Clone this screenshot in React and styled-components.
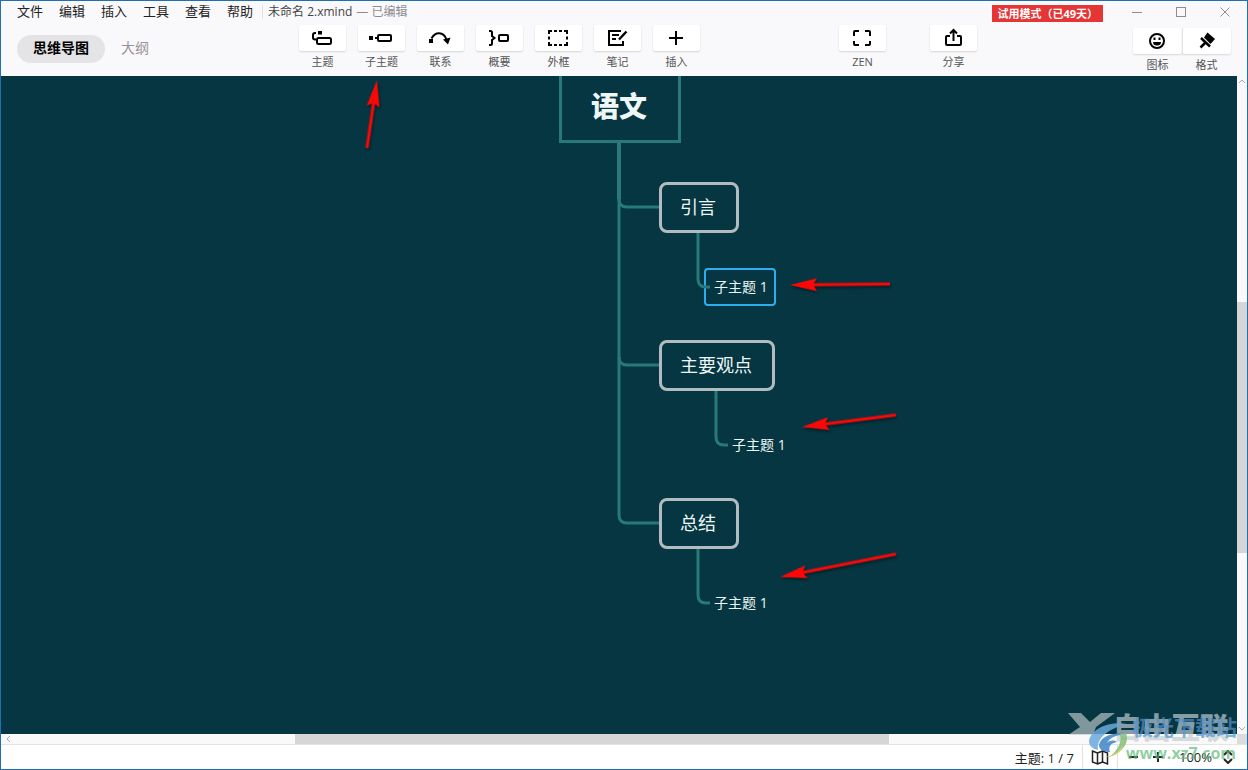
import { useState } from "react";
import styled, { createGlobalStyle } from "styled-components";

const GlobalStyle = createGlobalStyle`
  * {
    box-sizing: border-box;
  }
  body {
    margin: 0;
    font-family: "Open Sans", "Noto Sans CJK SC", sans-serif;
    color: #222;
  }
  button {
    font-family: inherit;
    border: none;
    background: none;
    padding: 0;
    color: inherit;
    cursor: pointer;
  }
`;

const Window = styled.div`
  height: 100vh;
  display: flex;
  flex-direction: column;
  border: 1px solid #1f6fb5;
  background: #fff;
  overflow: hidden;
  position: relative;
`;

/* ---------- header ---------- */

const Header = styled.header`
  height: 75px;
  background: #f9f9fc;
`;

const TitleBar = styled.div`
  height: 23px;
  display: flex;
  align-items: center;
  padding: 0 0 2px 16px;
`;

const Menu = styled.nav`
  display: flex;
  gap: 16px;
  button {
    font-size: 13px;
    line-height: 21px;
  }
`;

const DocTitle = styled.div`
  display: flex;
  gap: 4px;
  margin-left: 9px;
  padding-left: 5px;
  border-left: 1px solid #e2e2e6;
  font-size: 12px;
  line-height: 14px;
  color: #444;
`;

const Edited = styled.span`
  color: #8c8c90;
`;

const TrialBadge = styled.div`
  margin: 2px 12px 0 auto;
  padding: 0 5px;
  background: #e53535;
  color: #fff;
  font-size: 11px;
  font-weight: 700;
  line-height: 17px;
  align-self: flex-end;
`;

const WindowButton = styled.button`
  width: 44px;
  height: 21px;
  display: flex;
  align-items: center;
  justify-content: center;
`;

const Toolbar = styled.div`
  display: grid;
  grid-template-columns: 298px 1fr auto auto;
  align-items: start;
`;

const Tabs = styled.div`
  display: flex;
  padding: 11px 0 0 16px;
`;

const Tab = styled.button`
  height: 28px;
  padding: 0 16px;
  border-radius: 14px;
  font-size: 14px;
  line-height: 26px;
  padding-bottom: 2px;
  font-weight: ${(props) => (props.$active ? 700 : 400)};
  color: ${(props) => (props.$active ? "#000" : "#99949c")};
  background: ${(props) => (props.$active ? "#e4e4e7" : "transparent")};
`;

const ToolGroup = styled.div`
  display: flex;
  gap: ${(props) => props.$gap || 0}px;
  padding-top: ${(props) => props.$top}px;
  margin-right: ${(props) => props.$right || 0}px;
`;

const Tool = styled.button`
  display: flex;
  flex-direction: column;
  align-items: center;
  gap: 2px;
  font-size: 11px;
  line-height: 18px;
  color: #555;
`;

const IconBox = styled.span`
  width: ${(props) => (props.$joined ? 49 : 47)}px;
  height: 26px;
  padding-right: 1px;
  display: flex;
  align-items: center;
  justify-content: center;
  background: #fff;
  border-left: ${(props) => (props.$divided ? "1px solid #e2e2e6" : "none")};
  border-radius: 2px;
  box-shadow: 0 1px 2px rgba(0, 0, 0, 0.14);
  color: #000;
`;

/* ---------- canvas ---------- */

const Workspace = styled.div`
  flex: 1;
  min-height: 0;
  display: grid;
  grid-template-columns: 1fr 10px;
  grid-template-rows: 1fr 10px;
`;

const Canvas = styled.main`
  position: relative;
  overflow: hidden;
  background: #053641;
`;

const Lines = styled.svg`
  position: absolute;
  top: 0;
  left: 0;
  width: 100%;
  height: 100%;
  pointer-events: none;
`;

const Node = styled.div`
  position: absolute;
  left: ${(props) => props.$x}px;
  top: ${(props) => props.$y}px;
  white-space: nowrap;
  color: #eef6f6;
`;

const RootNode = styled(Node)`
  padding: 15px 31px 13px 29px;
  border: 3px solid #277a77;
  font-size: 28px;
  font-weight: 900;
  line-height: 42px;
`;

const MainNode = styled(Node)`
  padding: 9px 20px 9px 18px;
  border: 3px solid #b1bcbe;
  border-radius: 8px;
  font-size: 18px;
  line-height: 27px;
`;

const SubNode = styled(Node)`
  padding: 7px 6px 7px 8px;
  border: 2px solid ${(props) => (props.$selected ? "#2eaeee" : "transparent")};
  border-radius: 4px;
  font-size: 14px;
  line-height: 20px;
`;

const Scrollbar = styled.div`
  display: flex;
  flex-direction: ${(props) => (props.$vertical ? "column" : "row")};
  align-items: center;
  background: #f9f9f9;
  svg {
    flex: none;
  }
`;

const Track = styled.div`
  flex: 1;
  align-self: stretch;
  display: flex;
  flex-direction: ${(props) => (props.$vertical ? "column" : "row")};
`;

const Space = styled.div`
  flex: ${(props) => props.$size};
`;

const Thumb = styled(Space)`
  background: #d6d6d6;
`;

const Corner = styled.div`
  background: #dcdcdc;
`;

/* ---------- status bar ---------- */

const StatusBar = styled.footer`
  height: 25px;
  display: flex;
  justify-content: flex-end;
  align-items: center;
  padding-right: 12px;
  border-top: 1px solid #e4e4e4;
  font-size: 13px;
  color: #222;
`;

const StatusCell = styled.div`
  height: 24px;
  display: flex;
  align-items: center;
  padding: 0 8px;
  border-right: 1px solid #e2e2e2;
`;

const ZoomControls = styled.div`
  display: flex;
  align-items: center;
  gap: 12px;
  padding-left: 10px;
  button {
    display: flex;
  }
`;

const ZoomValue = styled.label`
  display: flex;
  align-items: center;
  gap: 9px;
  margin-left: 3px;
`;

const Watermark = styled.div`
  position: absolute;
  right: 10px;
  bottom: 4px;
  width: 172px;
  height: 56px;
  pointer-events: none;
  svg {
    position: absolute;
    left: 0;
    top: 0;
  }
`;

const MarkText = styled.span`
  position: absolute;
  right: ${(props) => props.$right}px;
  top: ${(props) => props.$top}px;
  font-size: ${(props) => props.$size}px;
  line-height: ${(props) => props.$size}px;
  font-weight: ${(props) => props.$weight};
  color: ${(props) => props.$color};
  white-space: nowrap;
`;

/* ---------- icons ---------- */

const Icon = ({ children, size = 24 }) => (
  <svg
    width={size}
    height={size}
    viewBox={`0 0 ${size} ${size}`}
    fill="none"
    stroke="currentColor"
    strokeWidth="2"
    aria-hidden="true"
  >
    {children}
  </svg>
);

const icons = {
  topic: (
    <Icon>
      <path d="M6 7H5a2 2 0 0 0-2 2v2.5a2 2 0 0 0 2 2h1" />
      <rect x="8" y="5" width="4" height="3.5" fill="currentColor" stroke="none" />
      <rect x="7" y="12" width="14" height="6" rx="1.5" />
    </Icon>
  ),
  subtopic: (
    <Icon>
      <rect x="0" y="10" width="4" height="4" fill="currentColor" stroke="none" />
      <path d="M6 12h3" />
      <rect x="9" y="9" width="13" height="6" rx="1" />
    </Icon>
  ),
  relation: (
    <Icon>
      <rect x="1" y="13" width="4" height="4" fill="currentColor" stroke="none" />
      <path d="M3.5 12.5C7 5.5 15.5 5 18.5 13.5" />
      <path d="M15 13.5 22.5 11.5 20 18.5Z" fill="currentColor" stroke="none" />
    </Icon>
  ),
  summary: (
    <Icon>
      <path d="M2 5h1.5A1.5 1.5 0 0 1 5 6.500v3.500l2.500 2L5 14v3.500A1.500 1.500 0 0 1 3.500 19H2" />
      <rect x="12" y="9" width="9" height="6" rx="1" />
    </Icon>
  ),
  boundary: (
    <Icon>
      <path d="M3 8V5h3M18 5h3v3M21 16v3h-3M6 19H3v-3" />
      <path d="M8 5h3M13 5h3M8 19h3M13 19h3M3 10.5v3M21 10.5v3" />
    </Icon>
  ),
  note: (
    <Icon>
      <path d="M16 5H4v14h14v-4" />
      <path d="M7 9h7M7 13h4" />
      <path d="M21.5 5.5 14 13.5" strokeWidth="2.5" />
    </Icon>
  ),
  insert: (
    <Icon>
      <path d="M12 5v14M5 12h14" />
    </Icon>
  ),
  zen: (
    <Icon>
      <path d="M4 10V6a1 1 0 0 1 1-1h4M15 5h4a1 1 0 0 1 1 1v4M20 15v3a1 1 0 0 1-1 1h-4M9 19H5a1 1 0 0 1-1-1v-3" />
    </Icon>
  ),
  share: (
    <Icon>
      <path d="M9 10H6a1 1 0 0 0-1 1v7a1 1 0 0 0 1 1h13a1 1 0 0 0 1-1v-7a1 1 0 0 0-1-1h-3" />
      <path d="M12.5 15V4.5M9 7.500 12.500 4l3.500 3.500" />
    </Icon>
  ),
  sticker: (
    <Icon>
      <circle cx="12" cy="12" r="7" />
      <path d="M8 13h8a4 3.500 0 0 1-8 0Z" fill="currentColor" stroke="none" />
      <path d="M9.500 8.500v2.500M14.500 8.500v2.500" />
    </Icon>
  ),
  format: (
    <Icon>
      <path d="M12.500 3.500 20 10 15.500 15 9 8.500Z" fill="currentColor" stroke="none" />
      <path d="M6 9 15 17.500M10.500 13.500 5.500 18.500" strokeWidth="2.500" />
    </Icon>
  ),
};

const tools = [
  { id: "topic", label: "主题" },
  { id: "subtopic", label: "子主题" },
  { id: "relation", label: "联系" },
  { id: "summary", label: "概要" },
  { id: "boundary", label: "外框" },
  { id: "note", label: "笔记" },
  { id: "insert", label: "插入" },
];

const viewTools = [
  { id: "zen", label: "ZEN" },
  { id: "share", label: "分享" },
];

const panelTools = [
  { id: "sticker", label: "图标" },
  { id: "format", label: "格式" },
];

const menus = ["文件", "编辑", "插入", "工具", "查看", "帮助"];

const mainTopics = [
  { text: "引言", x: 658, y: 106 },
  { text: "主要观点", x: 658, y: 264 },
  { text: "总结", x: 658, y: 422 },
];

const subTopics = [
  { x: 703, y: 192 },
  { x: 721, y: 350 },
  { x: 703, y: 508 },
];

const arrows = [
  { tip: [376, 4], tail: [366, 72] },
  { tip: [789, 209], tail: [889, 208] },
  { tip: [801, 351], tail: [895, 339] },
  { tip: [779, 501], tail: [895, 478] },
];

function ToolButtons({ items, joined }) {
  return items.map((item, i) => (
    <Tool key={item.id}>
      <IconBox $joined={joined} $divided={joined && i > 0}>
        {icons[item.id]}
      </IconBox>
      {item.label}
    </Tool>
  ));
}

function Arrow({ tip, tail }) {
  const dx = tail[0] - tip[0];
  const dy = tail[1] - tip[1];
  const length = Math.hypot(dx, dy);
  const angle = (Math.atan2(dy, dx) * 180) / Math.PI;
  return (
    <path
      transform={`translate(${tip[0]} ${tip[1]}) rotate(${angle})`}
      d={`M0 0 27 -6.5 24 -1.5H${length}V1.5H24L27 6.5Z`}
      fill="#fb0707"
    />
  );
}

function Chevron({ d }) {
  return (
    <svg width="10" height="10" fill="none" stroke="#a3a8b0" aria-hidden="true">
      <path d={d} />
    </svg>
  );
}

function MindMap() {
  const [selected, setSelected] = useState(0);

  return (
    <Canvas>
      <RootNode $x={558} $y={-9}>
        语文
      </RootNode>
      {mainTopics.map((topic) => (
        <MainNode key={topic.text} $x={topic.x} $y={topic.y}>
          {topic.text}
        </MainNode>
      ))}
      {subTopics.map((topic, i) => (
        <SubNode
          key={topic.y}
          $x={topic.x}
          $y={topic.y}
          $selected={selected === i}
          onClick={() => setSelected(i)}
        >
          子主题 1
        </SubNode>
      ))}
      <Lines>
        <g fill="none" stroke="#277a77" strokeWidth="3">
          <path d="M618 66V439q0 8 8 8H658" />
          <path d="M618 66V123" strokeWidth="4" />
          <path d="M618 123q0 8 8 8H658" />
          <path d="M618 281q0 8 8 8H658" />
          <path d="M697 157V203q0 8 8 8h4" />
          <path d="M715 315V361q0 8 8 8h4" />
          <path d="M697 473V519q0 8 8 8h4" />
        </g>
        <g filter="drop-shadow(1px 2px 1px rgba(0, 0, 0, 0.4))">
          {arrows.map((arrow) => (
            <Arrow key={arrow.tip.join()} {...arrow} />
          ))}
        </g>
      </Lines>
    </Canvas>
  );
}

export default function App() {
  const [tab, setTab] = useState("思维导图");

  return (
    <Window>
      <GlobalStyle />
      <Header>
        <TitleBar>
          <Menu>
            {menus.map((name) => (
              <button key={name}>{name}</button>
            ))}
          </Menu>
          <DocTitle>
            <span>未命名 2.xmind</span>
            <Edited>— 已编辑</Edited>
          </DocTitle>
          <TrialBadge>试用模式（已49天）</TrialBadge>
          <WindowButton aria-label="最小化">
            <svg width="12" height="12" stroke="#8d8d92">
              <path d="M1 6.5h10" />
            </svg>
          </WindowButton>
          <WindowButton aria-label="最大化">
            <svg width="12" height="12" fill="none" stroke="#8d8d92">
              <rect x="1.5" y="1.5" width="9" height="9" />
            </svg>
          </WindowButton>
          <WindowButton aria-label="关闭">
            <svg width="12" height="12" stroke="#8d8d92">
              <path d="M1.5 1.5l9 9M10.5 1.5l-9 9" />
            </svg>
          </WindowButton>
        </TitleBar>
        <Toolbar>
          <Tabs>
            {["思维导图", "大纲"].map((name) => (
              <Tab key={name} $active={tab === name} onClick={() => setTab(name)}>
                {name}
              </Tab>
            ))}
          </Tabs>
          <ToolGroup $gap={12} $top={1}>
            <ToolButtons items={tools} />
          </ToolGroup>
          <ToolGroup $gap={44} $top={1} $right={156}>
            <ToolButtons items={viewTools} />
          </ToolGroup>
          <ToolGroup $top={4} $right={16}>
            <ToolButtons items={panelTools} joined />
          </ToolGroup>
        </Toolbar>
      </Header>

      <Workspace>
        <MindMap />
        <Scrollbar $vertical>
          <Chevron d="M2 7l3-3 3 3" />
          <Track $vertical>
            <Space $size={216} />
            <Thumb $size={251} />
            <Space $size={171} />
          </Track>
          <Chevron d="M2 3l3 3 3-3" />
        </Scrollbar>
        <Scrollbar>
          <Chevron d="M9 2l-3 3 3 3" />
          <Track>
            <Space $size={284} />
            <Thumb $size={594} />
            <Space $size={348} />
          </Track>
        </Scrollbar>
        <Corner />
      </Workspace>

      <StatusBar>
        <StatusCell>主题: 1 / 7</StatusCell>
        <StatusCell>
          <Icon size={18}>
            <path
              d="M1.5 3 6.500 5v11L1.500 14ZM6.500 5l5-2v11l-5 2M11.500 3l5 2v11l-5-2"
              strokeWidth="1.500"
            />
          </Icon>
        </StatusCell>
        <ZoomControls>
          <button aria-label="缩小">
            <Icon size={12}>
              <path d="M1 6h9" />
            </Icon>
          </button>
          <button aria-label="放大">
            <Icon size={12}>
              <path d="M1 6h10M6 1v10" />
            </Icon>
          </button>
          <ZoomValue>
            100%
            <button aria-label="缩放比例">
              <Icon size={14}>
                <path d="M3 5l4-4 4 4M3 9l4 4 4-4" />
              </Icon>
            </button>
          </ZoomValue>
        </ZoomControls>
      </StatusBar>

      <Watermark aria-hidden="true">
        <svg width="172" height="56">
          <path
            d="M3 4H16L25 13 36 4H50L31 18 28 26H22L15 26H3L15 18Z"
            fill="#c3cdd1"
            opacity="0.65"
          />
        </svg>
        <MarkText $right={8} $top={4} $size={29} $weight={900} $color="rgba(195, 205, 209, 0.7)">
          自由互联
        </MarkText>
        <svg width="172" height="56">
          <g opacity="0.85">
            <path
              d="M62 15C44 12 26 20 24 32c0 5 4 8 9 9-2-11 9-21 29-26Z"
              fill="#6ba9dc"
            />
            <path
              d="M34 36c2-9 14-13 26-11-9 1-16 4-18 9 3-3 7-3 10-1-6 1-9 4-7 10-6 0-11-2-11-7Z"
              fill="#3f84c8"
            />
            <path d="M61 24c4 10-4 20-17 24 9-7 13-15 11-22Z" fill="#86c07a" />
            <path d="M37 47c7 2 15-2 21-10-2 7-11 13-21 10Z" fill="#dccf55" />
          </g>
        </svg>
        <MarkText $right={0} $top={8} $size={21} $weight={700} $color="rgba(85, 145, 205, 0.7)">
          极光下载站
        </MarkText>
        <MarkText $right={1} $top={36} $size={16} $weight={700} $color="rgba(95, 185, 120, 0.7)">
          www.xz7.com
        </MarkText>
      </Watermark>
    </Window>
  );
}
